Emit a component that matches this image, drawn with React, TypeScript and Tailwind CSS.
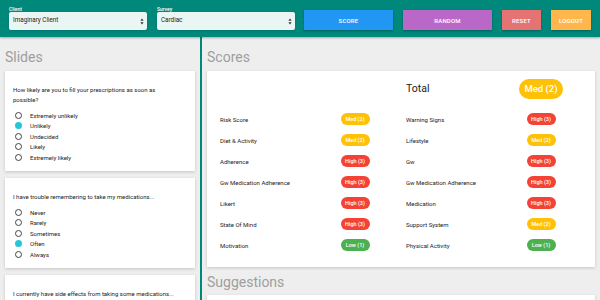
import React from "react";

type Level = "High" | "Med" | "Low";

const badgeColor: Record<Level, string> = {
  High: "bg-[#f44336]",
  Med: "bg-[#ffc107]",
  Low: "bg-[#4caf50]",
};

const levelNum: Record<Level, number> = { High: 3, Med: 2, Low: 1 };

const scores: [string, Level, string, Level][] = [
  ["Risk Score", "Med", "Warning Signs", "High"],
  ["Diet & Activity", "Med", "Lifestyle", "Med"],
  ["Adherence", "High", "Gw", "High"],
  ["Gw Medication Adherence", "High", "Gw Medication Adherence", "High"],
  ["Likert", "High", "Medication", "High"],
  ["State Of Mind", "High", "Support System", "Med"],
  ["Motivation", "Low", "Physical Activity", "Low"],
];

// third slide's answers fall below the fold, only its question shows
const slides = [
  {
    q: "How likely are you to fill your prescriptions as soon as possible?",
    options: ["Extremely unlikely", "Unlikely", "Undecided", "Likely", "Extremely likely"],
    checked: 1,
  },
  {
    q: "I have trouble remembering to take my medications...",
    options: ["Never", "Rarely", "Sometimes", "Often", "Always"],
    checked: 3,
  },
  {
    q: "I currently have side effects from taking some medications...",
    options: [] as string[],
    checked: -1,
  },
];

function Badge({ level, big }: { level: Level; big?: boolean }) {
  const size = big ? "h-[20px] px-[5px] text-[9.5px] font-medium" : "h-[12px] w-[29px] text-[5.5px] font-medium";
  return (
    <span className={`inline-flex items-center justify-center rounded-full text-white ${badgeColor[level]} ${size}`}>
      {level} ({levelNum[level]})
    </span>
  );
}

function SelectBox({ label, value }: { label: string; value: string }) {
  return (
    <div className="flex flex-col w-[138px]">
      <span className="text-[5px] leading-[6px] text-white font-medium mt-[-1px]">{label}</span>
      <div className="h-[18px] rounded-[2px] bg-[#eaf6f4] flex items-center justify-between pl-[4px] pr-[3px] shadow-sm">
        <span className="text-[6.3px] text-[#222]">{value}</span>
        <svg width="4" height="7" viewBox="0 0 4 7">
          <path d="M2 0.5 L3.6 2.8 L0.4 2.8 Z" fill="#333" />
          <path d="M2 6.5 L3.6 4.2 L0.4 4.2 Z" fill="#333" />
        </svg>
      </div>
    </div>
  );
}

export default function App() {
  return (
    <div
      className="w-[600px] h-[300px] overflow-hidden bg-[#eeeeee] flex flex-col"
      style={{ fontFamily: "Roboto, 'Liberation Sans', sans-serif" }}
    >
      <header className="h-[37px] shrink-0 bg-[#00897b] flex items-start pt-[7px] pl-[9px] shadow-[0_1px_2px_rgba(0,0,0,0.3)] relative z-10">
        <SelectBox label="Client" value="Imaginary Client" />
        <div className="w-[10px]" />
        <SelectBox label="Survey" value="Cardiac" />
        <div className="flex gap-[10px] ml-[9px] mt-[3px] text-white text-[6px] font-medium tracking-[0.2px]">
          <button className="w-[89px] h-[20px] bg-[#2196f3] shadow-[0_1px_2px_rgba(0,0,0,0.3)]">SCORE</button>
          <button className="w-[89px] h-[20px] bg-[#ba68c8] shadow-[0_1px_2px_rgba(0,0,0,0.3)]">RANDOM</button>
          <button className="w-[39px] h-[20px] bg-[#e57373] shadow-[0_1px_2px_rgba(0,0,0,0.3)]">RESET</button>
          <button className="w-[40px] h-[20px] bg-[#ffb74d] shadow-[0_1px_2px_rgba(0,0,0,0.3)]">LOGOUT</button>
        </div>
      </header>

      <div className="flex flex-1 min-h-0">
        <section className="w-[200px] shrink-0 px-[5px] pt-[12px] overflow-hidden">
          <h2 className="text-[14px] leading-[16px] text-[#9e9e9e] mb-[6px]">Slides</h2>
          <div className="flex flex-col gap-[7px]">
            {slides.map((s, i) => (
              <div key={i} className="bg-white shadow-[0_1px_3px_rgba(0,0,0,0.18)] pt-[14px] pb-[8.5px] pl-[8px] pr-[16px]">
                <p className="text-[6px] leading-[10px] text-[#222]">{s.q}</p>
                <div className="mt-[5px] flex flex-col">
                  {s.options.map((o, j) => (
                    <div key={o} className="h-[10.5px] flex items-center text-[6px] text-[#222]">
                      {j === s.checked ? (
                        <span className="w-[7px] h-[7px] rounded-full bg-[#26c6da] ml-[2px]" />
                      ) : (
                        <span className="w-[7px] h-[7px] rounded-full border border-[#444] ml-[2px]" />
                      )}
                      <span className="ml-[8px]">{o}</span>
                    </div>
                  ))}
                </div>
              </div>
            ))}
          </div>
        </section>

        <div className="w-[2px] shrink-0 bg-[#00897b]" />

        <section className="flex-1 px-[5px] pt-[12px] overflow-hidden">
          <h2 className="text-[14px] leading-[16px] text-[#9e9e9e] mb-[6px]">Scores</h2>
          <div className="bg-white shadow-[0_1px_3px_rgba(0,0,0,0.18)] pt-[8px] pb-[11px] pl-[13px]">
            <div className="grid grid-cols-[186px_186px] h-[20px] items-center">
              <div />
              <div className="flex items-center">
                <span className="w-[105px] text-[10.5px] text-[#222]">Total</span>
                <span className="w-[60px] flex justify-center">
                  <Badge level="Med" big />
                </span>
              </div>
            </div>
            <div className="mt-[9.5px] grid grid-cols-[186px_186px]">
              {scores.map(([l1, v1, l2, v2]) => (
                <React.Fragment key={l1 + l2}>
                  <div className="h-[21px] flex items-center">
                    <span className="w-[105px] text-[6px] text-[#222]">{l1}</span>
                    <span className="w-[60px] flex justify-center">
                      <Badge level={v1} />
                    </span>
                  </div>
                  <div className="h-[21px] flex items-center">
                    <span className="w-[105px] text-[6px] text-[#222]">{l2}</span>
                    <span className="w-[60px] flex justify-center">
                      <Badge level={v2} />
                    </span>
                  </div>
                </React.Fragment>
              ))}
            </div>
          </div>
          <h2 className="text-[14px] leading-[16px] text-[#9e9e9e] mt-[7px] mb-[5px]">Suggestions</h2>
          <div className="bg-white shadow-[0_1px_3px_rgba(0,0,0,0.18)] h-[40px]" />
        </section>
      </div>
    </div>
  );
}
